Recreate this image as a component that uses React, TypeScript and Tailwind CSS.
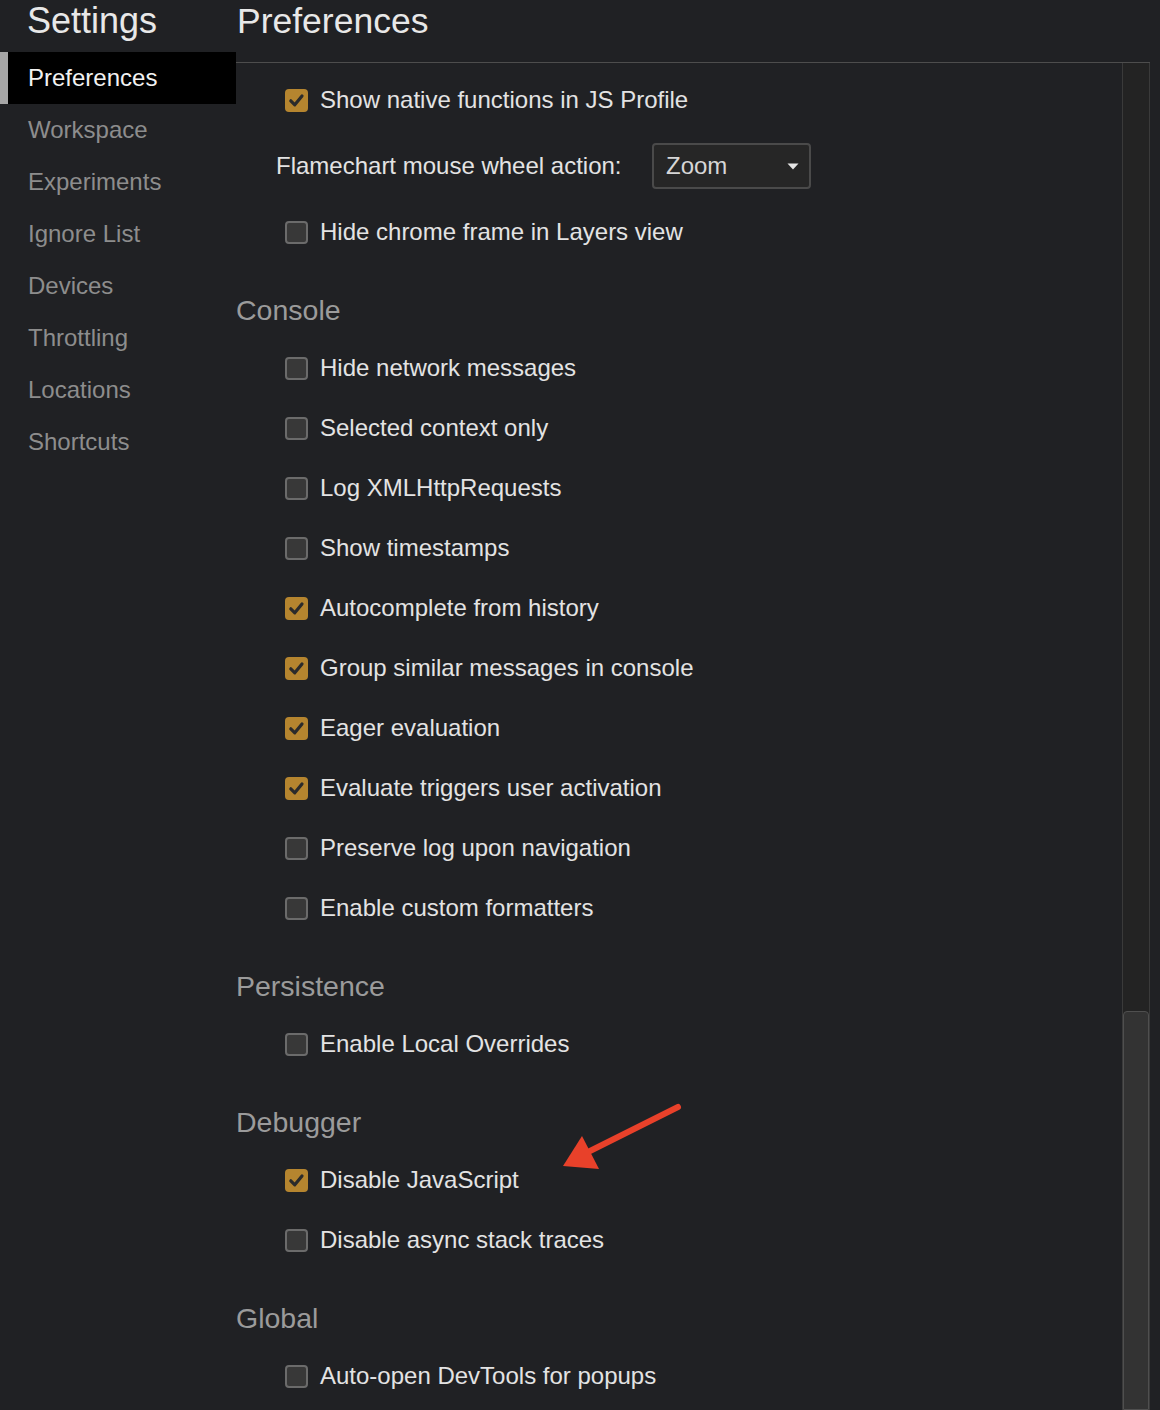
import React from "react";

const NAV = [
  "Preferences",
  "Workspace",
  "Experiments",
  "Ignore List",
  "Devices",
  "Throttling",
  "Locations",
  "Shortcuts",
];

type Item = { label: string; checked?: boolean };

const SECTIONS: { title: string; items: Item[] }[] = [
  {
    title: "Console",
    items: [
      { label: "Hide network messages" },
      { label: "Selected context only" },
      { label: "Log XMLHttpRequests" },
      { label: "Show timestamps" },
      { label: "Autocomplete from history", checked: true },
      { label: "Group similar messages in console", checked: true },
      { label: "Eager evaluation", checked: true },
      { label: "Evaluate triggers user activation", checked: true },
      { label: "Preserve log upon navigation" },
      { label: "Enable custom formatters" },
    ],
  },
  { title: "Persistence", items: [{ label: "Enable Local Overrides" }] },
  {
    title: "Debugger",
    items: [
      { label: "Disable JavaScript", checked: true },
      { label: "Disable async stack traces" },
    ],
  },
  { title: "Global", items: [{ label: "Auto-open DevTools for popups" }] },
];

function Checkbox({ checked }: { checked?: boolean }) {
  if (checked) {
    return (
      <span className="flex h-[23px] w-[23px] shrink-0 items-center justify-center rounded-[4px] bg-[#b5852f]">
        <svg width="23" height="23" viewBox="0 0 23 23">
          <polyline
            points="5.8,11.8 9.8,15.8 17,7"
            fill="none"
            stroke="#2b2b2b"
            strokeWidth="3.2"
            strokeLinecap="round"
            strokeLinejoin="round"
          />
        </svg>
      </span>
    );
  }
  return (
    <span className="h-[23px] w-[23px] shrink-0 rounded-[4px] border-2 border-[#6b6b6b] bg-[#383838]" />
  );
}

function CheckRow({ label, checked }: Item) {
  return (
    <div className="flex h-[60px] items-center gap-[12px] pl-[49px]">
      <Checkbox checked={checked} />
      <span className="text-[24px] leading-none text-[#e3e3e3]">{label}</span>
    </div>
  );
}

export default function App() {
  return (
    <div
      className="relative flex h-[1410px] w-[1160px] overflow-hidden bg-[#202124]"
      style={{ fontFamily: '"Liberation Sans", Arial, sans-serif' }}
    >
      {/* sidebar */}
      <aside className="flex w-[236px] shrink-0 flex-col">
        <div className="h-[52px] pl-[27px] pt-[3px] text-[36px] leading-[36px] text-[#e8e8e8]">
          Settings
        </div>
        {NAV.map((name, i) =>
          i === 0 ? (
            <div key={name} className="flex h-[52px]">
              <span className="w-[8px] bg-[#a6a6a6]" />
              <span className="flex flex-1 items-center bg-black pl-[20px] text-[24px] leading-none text-[#f2f2f2]">
                {name}
              </span>
            </div>
          ) : (
            <div
              key={name}
              className="flex h-[52px] items-center pl-[28px] text-[24px] leading-none text-[#8d8d8d]"
            >
              {name}
            </div>
          )
        )}
      </aside>

      {/* main */}
      <main className="flex flex-1 flex-col pr-[10px]">
        <div className="h-[63px] shrink-0 border-b border-[#4d4d4d] pl-[1px] pt-[3px] text-[35.5px] leading-[36px] text-[#e8e8e8]">
          Preferences
        </div>
        <div className="flex flex-1">
          <div className="flex-1 pt-[7px]">
            <CheckRow label="Show native functions in JS Profile" checked />
            <div className="flex h-[72px] items-center pl-[40px]">
              <span className="w-[347px] text-[24px] leading-none text-[#e3e3e3]">
                Flamechart mouse wheel action:
              </span>
              <div className="ml-[29px] flex h-[46px] w-[159px] items-center justify-between rounded-[4px] border-2 border-[#4a4a4a] bg-[#262626] pl-[12px] pr-[10px]">
                <span className="text-[24px] leading-none text-[#d6d6d6]">Zoom</span>
                <svg width="12" height="7" viewBox="0 0 12 7">
                  <polygon points="0.5,0.5 11.5,0.5 6,6.5" fill="#e6e6e6" />
                </svg>
              </div>
            </div>
            <CheckRow label="Hide chrome frame in Layers view" />

            {SECTIONS.map((s) => (
              <section key={s.title} className="mt-[28px]">
                <h2 className="flex h-[40px] items-center text-[28.5px] leading-none font-normal text-[#9b9b9b]">
                  {s.title}
                </h2>
                <div className="mt-[8px]">
                  {s.items.map((it) => (
                    <CheckRow key={it.label} {...it} />
                  ))}
                </div>
              </section>
            ))}
          </div>

          {/* scrollbar */}
          <div className="flex w-[28px] shrink-0 flex-col border-x border-[#3a3a3a] bg-[#232323]">
            <div className="h-[948px]" />
            <div className="flex-1 rounded-t-[4px] border border-[#4f4f4f] bg-[#333333]" />
          </div>
        </div>
      </main>

      {/* annotation arrow */}
      <svg
        className="pointer-events-none absolute inset-0"
        width="1160"
        height="1410"
        viewBox="0 0 1160 1410"
      >
        <line
          x1="678"
          y1="1107"
          x2="588"
          y2="1152"
          stroke="#e8412a"
          strokeWidth="6"
          strokeLinecap="round"
        />
        <polygon points="563,1166 582,1136 599,1169" fill="#e8412a" />
      </svg>
    </div>
  );
}
